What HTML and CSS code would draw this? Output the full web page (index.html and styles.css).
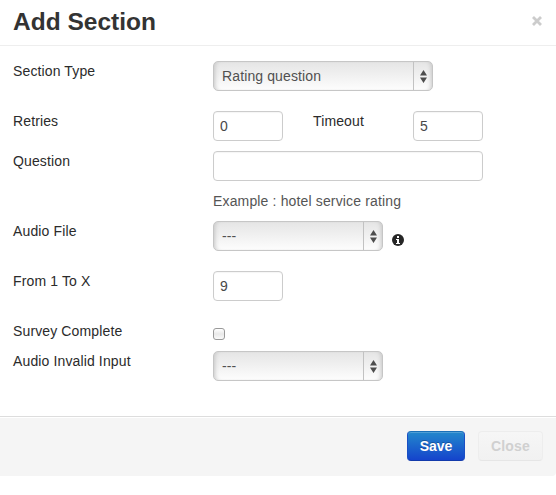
FILE: index.html
```html
<!DOCTYPE html>
<html lang="en">
<head>
<meta charset="utf-8">
<title>Add Section</title>
<link rel="stylesheet" href="styles.css">
</head>
<body>
<form class="modal">
  <header class="modal-header">
    <h3>Add Section</h3>
    <button class="dismiss" type="button" aria-label="Close"><svg width="10" height="10" viewBox="0 0 10 10"><path d="M1 1l8 8M9 1l-8 8"/></svg></button>
  </header>
  <div class="modal-body">
    <div class="row tall">
      <label for="type">Section Type</label>
      <div class="select wide"><select id="type"><option>Rating question</option></select><span class="stepper"><svg width="7" height="13" viewBox="0 0 7 13"><path d="M3.5 0L7 5.5H0zM0 7.5h7L3.5 13z"/></svg></span></div>
    </div>
    <div class="row">
      <label for="retries">Retries</label>
      <input class="text small" id="retries" value="0">
      <label class="second" for="timeout">Timeout</label>
      <input class="text small" id="timeout" value="5">
    </div>
    <div class="row question">
      <label for="question">Question</label>
      <div><input class="text large" id="question"><p class="help">Example : hotel service rating</p></div>
    </div>
    <div class="row tall">
      <label for="audio">Audio File</label>
      <div class="select"><select id="audio"><option>---</option></select><span class="stepper"><svg width="7" height="13" viewBox="0 0 7 13"><path d="M3.5 0L7 5.5H0zM0 7.5h7L3.5 13z"/></svg></span></div>
      <svg class="info" width="12" height="12" viewBox="0 0 12 12"><circle cx="6" cy="6" r="6"/><path d="M5 2h2v2H5zM4 5h3v4h1v1H4V9h1V6H4z"/></svg>
    </div>
    <div class="row tall">
      <label for="max">From 1 To X</label>
      <input class="text small" id="max" value="9">
    </div>
    <div class="row short">
      <label for="complete">Survey Complete</label>
      <input class="check" type="checkbox" id="complete">
    </div>
    <div class="row">
      <label for="invalid">Audio Invalid Input</label>
      <div class="select"><select id="invalid"><option>---</option></select><span class="stepper"><svg width="7" height="13" viewBox="0 0 7 13"><path d="M3.5 0L7 5.5H0zM0 7.5h7L3.5 13z"/></svg></span></div>
    </div>
  </div>
  <footer class="modal-footer">
    <button class="btn save" type="button">Save</button>
    <button class="btn close" type="button">Close</button>
  </footer>
</form>
</body>
</html>
```
FILE: styles.css
```css
* { box-sizing: border-box; }

body {
  margin: 0;
  background: #fff;
  color: #333;
  font: 14px/20px "Liberation Sans", Arial, sans-serif;
}

input, select, button { font: inherit; }

.modal { margin: 0; }

.modal-header {
  display: flex;
  justify-content: space-between;
  height: 46px;
  padding: 0 14px 0 13px;
  border-bottom: 1px solid #eee;
}

.modal-header h3 {
  margin: 2px 0 0;
  font-size: 24.5px;
  line-height: 40px;
}

.dismiss {
  width: 10px;
  height: 10px;
  margin-top: 16px;
  padding: 0;
  border: 0;
  background: none;
}

.dismiss svg {
  display: block;
  fill: none;
  stroke: #ccc;
  stroke-width: 2.8;
}

.modal-body {
  height: 370px;
  padding: 15px 13px 0;
}

.row {
  display: flex;
  align-items: flex-start;
  height: 40px;
}

.row.tall { height: 50px; }
.row.short { height: 30px; }
.row.question { height: 70px; }

label {
  width: 200px;
  color: #2b2b2b;
  letter-spacing: 0.13px;
}

label.second {
  width: 100px;
  margin-left: 30px;
}

.text {
  display: block;
  height: 30px;
  padding: 4px 6px;
  border: 1px solid #ccc;
  border-radius: 4px;
  background: #fff;
  color: #484848;
  box-shadow: inset 0 1px 1px rgba(0, 0, 0, 0.04);
}

.text.small { width: 70px; }
.text.large { width: 270px; }

.help {
  margin: 10px 0 0;
  color: #555;
  letter-spacing: 0.15px;
}

.select {
  display: flex;
  width: 170px;
  height: 30px;
  border: 1px solid #c6c6c6;
  border-radius: 5px;
  background: linear-gradient(#e5e5e5, #fdfdfd);
  box-shadow: inset 4px 0 4px -3px #c6c6c6, inset -4px 0 4px -3px #c6c6c6;
}

.select.wide { width: 220px; }

.select select {
  flex: 1;
  min-width: 0;
  padding: 0 8px;
  border: 0;
  background: none;
  color: #505050;
  letter-spacing: 0.12px;
  appearance: none;
}

.stepper {
  display: flex;
  align-items: center;
  justify-content: center;
  width: 19px;
  border-left: 1px solid #c2c2c2;
}

.stepper svg { fill: #4d4d4d; }

.info {
  margin: 13px 0 0 9px;
  fill: #262626;
}

.info path { fill: #fff; }

.check {
  width: 12px;
  height: 12px;
  margin: 7px 0 0;
  border: 1px solid #999;
  border-radius: 3px;
  background: linear-gradient(#fff, #e9e9e9 50%, #fafafa);
  appearance: none;
}

.modal-footer {
  display: flex;
  justify-content: flex-end;
  gap: 13px;
  height: 60px;
  padding: 14px 13px 0 0;
  border-top: 1px solid #ddd;
  border-bottom-right-radius: 4px;
  background: #f5f5f5;
  box-shadow: inset 0 1px 0 #fff;
}

.btn {
  height: 30px;
  padding: 0 11px;
  border: 1px solid;
  border-radius: 4px;
  font-weight: bold;
}

.save {
  width: 58px;
  border-color: #1a70b8 #1a4fc4 #123aab;
  background: linear-gradient(#2388cc, #1544cc);
  box-shadow: inset 0 1px 0 rgba(255, 255, 255, 0.2);
  color: #fff;
  text-shadow: 0 -1px 0 rgba(0, 0, 0, 0.25);
}

.close {
  width: 65px;
  border-color: #ededed #ededed #e6e6e6;
  background: linear-gradient(#f6f6f6, #f1f1f1);
  color: #d0d0d0;
  letter-spacing: 0.15px;
}
```
